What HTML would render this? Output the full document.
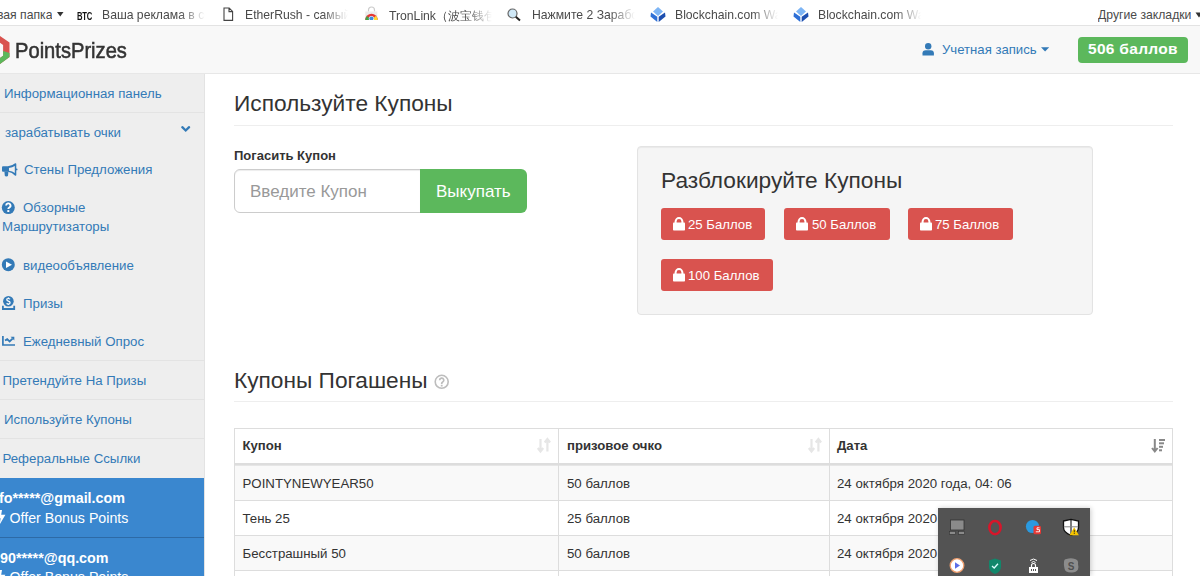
<!DOCTYPE html>
<html><head><meta charset="utf-8">
<style>
*{box-sizing:border-box;margin:0;padding:0}
html,body{width:1200px;height:576px;overflow:hidden;background:#fff;font-family:"Liberation Sans",sans-serif;color:#333}
.abs{position:absolute;white-space:nowrap}
svg{position:absolute;overflow:visible}
#bm{position:absolute;left:0;top:0;width:1200px;height:25px;background:#fff;font-size:12.2px;color:#4a4a4a}
#bmline{position:absolute;left:0;top:25px;width:1200px;height:1px;background:#e3e3e3}
.bk{position:absolute;top:8px;white-space:nowrap;overflow:hidden}
.fade{-webkit-mask-image:linear-gradient(to right,#000 75%,transparent 100%)}
#navbg{position:absolute;left:0;top:26px;width:1200px;height:47px;background:#f8f8f8}
#nav{position:absolute;left:0;top:27px;width:1200px;height:46px}
#navline{position:absolute;left:0;top:73px;width:1200px;height:1px;background:#e7e7e7}
#side{position:absolute;left:0;top:74px;width:205px;height:502px;background:#eee;border-right:1px solid #e3e3e3}
.si{position:absolute;left:0;white-space:nowrap;font-size:13.25px;color:#337ab7}
.sl{position:absolute;left:0;width:204px;height:1px;background:#e3e3e3}
.btn{position:absolute;height:32px;border-radius:3px;background:#d9534f;color:#fff;font-size:13.2px;white-space:nowrap}
.btn span{position:absolute;top:9px}
.td{position:absolute;font-size:13.25px;color:#333;white-space:nowrap}
.b{font-weight:bold;font-size:13.15px}
.h3{position:absolute;font-size:22.7px;margin-top:-1px;color:#333;white-space:nowrap}
</style></head><body>
<div id="bm">
  <div class="bk" style="left:-3px">вая папка</div>
  <svg style="left:57px;top:12px" width="8" height="6"><path d="M0 0H6.5L3.25 4.5Z" fill="#333"/></svg>
  <div class="abs" style="left:76.5px;top:10px;font-size:9px;font-weight:bold;color:#111;letter-spacing:-0.3px;transform:scale(0.85,1.2);transform-origin:0 0">BTC</div>
  <div class="bk fade" style="left:102px;width:103px">Ваша реклама в сети</div>
  <svg style="left:222.6px;top:7px" width="11" height="15"><path d="M1 1H6.2L9.6 4.4V13.4H1Z M6 1.2V4.6H9.4" fill="#fff" stroke="#444" stroke-width="1.1"/></svg>
  <div class="bk fade" style="left:245px;width:103px">EtherRush - самый</div>
  <svg style="left:365px;top:7px" width="13" height="14"><path d="M3.5 4.5V3a3 3 0 0 1 6 0V4.5" fill="none" stroke="#ccc" stroke-width="1.2"/><rect x="0.3" y="4.5" width="12" height="8.5" fill="#ececec"/><path d="M0.3 13a6.2 6.2 0 0 1 12.4 0Z" fill="#e53935"/><path d="M0.3 13a6.2 6.2 0 0 1 1.6-4.1L6.5 13Z" fill="#43a047"/><path d="M6.5 13L11 8.8a6.2 6.2 0 0 1 1.7 4.2Z" fill="#fdd835"/><circle cx="6.4" cy="11.6" r="2.6" fill="#fff"/><circle cx="6.4" cy="11.6" r="2.1" fill="#3d8fe0"/><rect x="0" y="13" width="13" height="1" fill="#fff"/></svg>
  <div class="bk fade" style="left:389px;width:103px">TronLink（波宝钱包</div>
  <svg style="left:507px;top:8px" width="14" height="13"><circle cx="5.5" cy="5.5" r="4.5" fill="#cfe8f7" stroke="#666" stroke-width="1.2"/><path d="M8.8 8.8L13 12.5" stroke="#222" stroke-width="2"/></svg>
  <div class="bk fade" style="left:532px;width:103px">Нажмите 2 Заработать</div>
  <svg style="left:650px;top:7px" width="16" height="15"><path d="M8 0L13 4.5L8 9L3 4.5Z" fill="#7db5f5"/><path d="M1 5.5L7.3 9.8V15L0.5 9.5Z" fill="#2d6fd6"/><path d="M15 5.5L8.7 9.8V15L15.5 9.5Z" fill="#1d4fb0"/></svg>
  <div class="bk fade" style="left:675px;width:103px">Blockchain.com Wallet</div>
  <svg style="left:793px;top:7px" width="16" height="15"><path d="M8 0L13 4.5L8 9L3 4.5Z" fill="#7db5f5"/><path d="M1 5.5L7.3 9.8V15L0.5 9.5Z" fill="#2d6fd6"/><path d="M15 5.5L8.7 9.8V15L15.5 9.5Z" fill="#1d4fb0"/></svg>
  <div class="bk fade" style="left:818px;width:103px">Blockchain.com Wallet</div>
  <div class="bk" style="left:1098px">Другие закладки</div>
  <svg style="left:1195px;top:12px" width="8" height="6"><path d="M0.5 0.5H7.5L4 5.5Z" fill="#333"/></svg>
</div>
<div id="bmline"></div>
<div id="navbg"></div>
<div id="nav">
  <svg style="left:0;top:0" width="12" height="46"><path d="M-4 6.1L9.5 15.5V30L-4 39.9Z M-4 13L3.1 18V28.7L-4 33.7Z" fill="#d9534f" fill-rule="evenodd"/><path d="M-4 21.7L9.5 26V30L-4 39.9Z M-4 21.7L3.1 24V28.7L-4 33.7Z" fill="#5cb85c" fill-rule="evenodd"/></svg>
  <div class="abs" style="left:14.5px;top:11px;font-size:22.5px;color:#333;transform:scaleX(0.895);transform-origin:0 0;-webkit-text-stroke:0.55px #333">PointsPrizes</div>
  <svg style="left:922px;top:15px" width="13" height="14"><circle cx="6.2" cy="4.2" r="3.2" fill="#337ab7"/><path d="M0.5 13.6V11.2Q0.5 8.3 3.8 8.3H8.6Q11.9 8.3 11.9 11.2V13.6Z" fill="#337ab7"/></svg>
  <div class="abs" style="left:942px;top:14.8px;font-size:13.15px;color:#337ab7">Учетная запись</div>
  <svg style="left:1040.5px;top:20.3px" width="9" height="5"><path d="M0 0.3H8.2L4.1 4.4Z" fill="#337ab7"/></svg>
  <div class="abs" style="left:1078px;top:10px;width:110px;height:26px;background:#5cb85c;border-radius:4px"></div>
  <div class="abs" style="left:1088px;top:13px;font-size:15.5px;font-weight:bold;color:#fff;letter-spacing:0.3px">506 баллов</div>
</div>
<div id="navline"></div>
<div id="side">
  <div class="si" style="left:4px;top:12px">Информационная панель</div>
  <div class="sl" style="top:38px"></div>
  <div class="si" style="left:5px;top:51px">зарабатывать очки</div>
  
  
  <div class="si" style="left:24px;top:88px">Стены Предложения</div>
  
  <div class="si" style="left:23px;top:126px">Обзорные</div>
  <div class="si" style="left:2px;top:145px">Маршрутизаторы</div>
  
  <div class="si" style="left:23px;top:184px">видеообъявление</div>
  
  <div class="si" style="left:23px;top:222px">Призы</div>
  
  <div class="si" style="left:23px;top:260px">Ежедневный Опрос</div>
  <div class="sl" style="top:286px"></div>
  <div class="si" style="left:2.5px;top:299px">Претендуйте На Призы</div>
  <div class="sl" style="top:325px"></div>
  <div class="si" style="left:4px;top:338px">Используйте Купоны</div>
  <div class="sl" style="top:364px"></div>
  <div class="si" style="left:2.5px;top:377px">Реферальные Ссылки</div>
  <div class="abs" style="left:0;top:404px;width:204px;height:59px;background:#3a87cf"></div>
  <div class="abs" style="left:0;top:463px;width:204px;height:1px;background:#2d6aa6"></div>
  <div class="abs" style="left:0;top:464px;width:204px;height:40px;background:#3a87cf"></div>
  <div class="abs" style="left:-1px;top:416px;font-size:14.3px;font-weight:bold;color:#fff">fo*****@gmail.com</div>
  <div class="abs" style="left:9.5px;top:435.5px;font-size:14.2px;color:#fff">Offer Bonus Points</div>
  <div class="abs" style="left:0;top:475.5px;font-size:14.3px;font-weight:bold;color:#fff">90*****@qq.com</div>
  <div class="abs" style="left:9.5px;top:495px;font-size:14.2px;color:#fff">Offer Bonus Points</div>
</div>

<div class="h3" style="left:234px;top:91px">Используйте Купоны</div>
<div class="abs" style="left:234px;top:125px;width:939px;height:1px;background:#eee"></div>
<div class="abs" style="left:234px;top:148px;font-size:13px;font-weight:bold;color:#333">Погасить Купон</div>
<div class="abs" style="left:234px;top:169px;width:187px;height:44px;border:1px solid #ccc;border-radius:6px 0 0 6px;background:#fff;box-shadow:inset 0 1px 1px rgba(0,0,0,.075)"></div>
<div class="abs" style="left:250px;top:181.5px;font-size:17px;color:#999">Введите Купон</div>
<div class="abs" style="left:420px;top:169px;width:107px;height:44px;background:#5cb85c;border-radius:0 6px 6px 0"></div>
<div class="abs" style="left:436px;top:181.5px;font-size:17px;color:#fff">Выкупать</div>

<div class="abs" style="left:637px;top:146px;width:456px;height:169px;background:#f5f5f5;border:1px solid #e3e3e3;border-radius:4px;box-shadow:inset 0 1px 1px rgba(0,0,0,.05)"></div>
<div class="h3" style="left:661px;top:168px">Разблокируйте Купоны</div>
<div class="btn" style="left:661px;top:208px;width:104px"><svg style="left:11px;top:9px" width="14" height="15"><path d="M3.6 6V4.5a3.4 3.4 0 0 1 6.8 0V6" fill="none" stroke="#fff" stroke-width="2"/><rect x="1" y="5.6" width="12" height="7.9" rx="0.8" fill="#fff"/></svg><span style="left:27px">25 Баллов</span></div>
<div class="btn" style="left:784px;top:208px;width:106px"><svg style="left:11px;top:9px" width="14" height="15"><path d="M3.6 6V4.5a3.4 3.4 0 0 1 6.8 0V6" fill="none" stroke="#fff" stroke-width="2"/><rect x="1" y="5.6" width="12" height="7.9" rx="0.8" fill="#fff"/></svg><span style="left:28px">50 Баллов</span></div>
<div class="btn" style="left:908px;top:208px;width:105px"><svg style="left:11px;top:9px" width="14" height="15"><path d="M3.6 6V4.5a3.4 3.4 0 0 1 6.8 0V6" fill="none" stroke="#fff" stroke-width="2"/><rect x="1" y="5.6" width="12" height="7.9" rx="0.8" fill="#fff"/></svg><span style="left:27px">75 Баллов</span></div>
<div class="btn" style="left:661px;top:259px;width:112px"><svg style="left:11px;top:9px" width="14" height="15"><path d="M3.6 6V4.5a3.4 3.4 0 0 1 6.8 0V6" fill="none" stroke="#fff" stroke-width="2"/><rect x="1" y="5.6" width="12" height="7.9" rx="0.8" fill="#fff"/></svg><span style="left:27px">100 Баллов</span></div>

<div class="h3" style="left:234px;top:367.5px">Купоны Погашены</div>
<svg style="left:434px;top:374px" width="16" height="16"><circle cx="7.7" cy="7.8" r="6.5" fill="none" stroke="#bdbdbd" stroke-width="1.6"/><path d="M5.6 6.2a2.1 2.1 0 1 1 3.1 1.8c-.7.4-1 .8-1 1.6v.4" fill="none" stroke="#bdbdbd" stroke-width="1.7"/><rect x="6.8" y="10.8" width="1.8" height="1.7" fill="#bdbdbd"/></svg>
<div class="abs" style="left:234px;top:401px;width:939px;height:1px;background:#eee"></div>

<div class="abs" style="left:234px;top:428px;width:939px;height:148px;border:1px solid #ddd;border-bottom:none"></div>
<div class="abs" style="left:235px;top:463px;width:937px;height:2px;background:#ddd"></div>
<div class="abs" style="left:235px;top:465px;width:937px;height:1px;background:#e6e6e6"></div>
<div class="abs" style="left:235px;top:466px;width:937px;height:34px;background:#f9f9f9"></div>
<div class="abs" style="left:235px;top:500px;width:937px;height:1px;background:#ddd"></div>
<div class="abs" style="left:235px;top:535px;width:937px;height:1px;background:#ddd"></div>
<div class="abs" style="left:235px;top:536px;width:937px;height:34px;background:#f9f9f9"></div>
<div class="abs" style="left:235px;top:570px;width:937px;height:1px;background:#ddd"></div>
<div class="abs" style="left:558px;top:429px;width:1px;height:147px;background:#ddd"></div>
<div class="abs" style="left:829px;top:429px;width:1px;height:147px;background:#ddd"></div>
<div class="td b" style="left:242.5px;top:438px">Купон</div>
<div class="td b" style="left:567px;top:438px">призовое очко</div>
<div class="td b" style="left:837px;top:438px">Дата</div>
<svg style="left:530px;top:430px" width="30" height="30">
 <path d="M10.5 9V20.5 M7.8 18L10.5 21.5L13.2 18" fill="none" stroke="#e6e6e6" stroke-width="2.2"/>
 <path d="M17.4 21.5V10 M14.7 12.5L17.4 9L20.1 12.5" fill="none" stroke="#e6e6e6" stroke-width="2.2"/>
</svg>
<svg style="left:801px;top:430px" width="30" height="30">
 <path d="M10.5 9V20.5 M7.8 18L10.5 21.5L13.2 18" fill="none" stroke="#e6e6e6" stroke-width="2.2"/>
 <path d="M17.4 21.5V10 M14.7 12.5L17.4 9L20.1 12.5" fill="none" stroke="#e6e6e6" stroke-width="2.2"/>
</svg>
<svg style="left:1145px;top:430px" width="30" height="30">
 <path d="M9.8 9V20.5 M7 18L9.8 21.5L12.6 18" fill="none" stroke="#888" stroke-width="2"/>
 <rect x="14" y="9" width="6" height="2" fill="#888"/>
 <rect x="14" y="12.3" width="5" height="2" fill="#888"/>
 <rect x="14" y="15.8" width="4" height="2" fill="#888"/>
 <rect x="14" y="19.3" width="3" height="2" fill="#888"/>
</svg>
<div class="td" style="left:242.5px;top:475.5px">POINTYNEWYEAR50</div>
<div class="td" style="left:567px;top:475.5px">50 баллов</div>
<div class="td" style="left:837px;top:475.5px">24 октября 2020 года, 04: 06</div>
<div class="td" style="left:242.5px;top:510.5px">Тень 25</div>
<div class="td" style="left:567px;top:510.5px">25 баллов</div>
<div class="td" style="left:837px;top:510.5px">24 октября 2020 года, 04: 06</div>
<div class="td" style="left:242.5px;top:545.5px">Бесстрашный 50</div>
<div class="td" style="left:567px;top:545.5px">50 баллов</div>
<div class="td" style="left:837px;top:545.5px">24 октября 2020 года, 04: 06</div>

<svg style="left:0;top:158px" width="20" height="24">
 <rect x="2" y="8.3" width="6.8" height="5.5" rx="1" fill="#337ab7"/>
 <path d="M4.4 13.5H8.4L8 17.8Q7.8 18.6 6.4 18.6Q5 18.6 4.8 17.8Z" fill="#337ab7"/>
 <path d="M8 8.3Q12 7.8 15.2 5.2Q16.3 4.9 16.3 6V17Q16.3 18.1 15.2 17.7Q12 14.5 8 13.8Z M8.9 10Q12.5 9.5 14.8 7.9V15.1Q12.5 13.2 8.9 12.8Z" fill="#337ab7" fill-rule="evenodd"/>
 <circle cx="16.6" cy="11.4" r="0.9" fill="#337ab7"/>
</svg>
<svg style="left:0;top:196px" width="20" height="24">
 <circle cx="8.3" cy="11.6" r="6.5" fill="#337ab7"/>
 <path d="M6.1 9.6a2.2 2.2 0 1 1 3.3 1.9c-.8.45-1.1.8-1.1 1.6" fill="none" stroke="#fff" stroke-width="1.9"/>
 <rect x="7.3" y="14.1" width="2" height="1.9" fill="#fff"/>
</svg>
<svg style="left:0;top:253px" width="20" height="24">
 <circle cx="8.3" cy="11.7" r="6.5" fill="#337ab7"/>
 <path d="M6 8.6L12 11.8L6 15Z" fill="#fff"/>
</svg>
<svg style="left:0;top:292px" width="20" height="24">
 <circle cx="8.4" cy="9.3" r="5.3" fill="#337ab7"/>
 <path d="M10 7.3Q9.6 6.5 8.4 6.5Q6.8 6.5 6.8 7.8Q6.8 8.8 8.4 9.2Q10.1 9.6 10.1 10.8Q10.1 12.1 8.4 12.1Q7 12.1 6.7 11.2 M8.4 5.5V6.5 M8.4 12.1V13" fill="none" stroke="#fff" stroke-width="1.2"/>
 <path d="M2.9 13.8V17H14.2V13.8" fill="none" stroke="#337ab7" stroke-width="1.8"/>
</svg>
<svg style="left:0;top:330px" width="20" height="24">
 <path d="M2.9 6V15H15" fill="none" stroke="#337ab7" stroke-width="1.7"/>
 <path d="M5 10.6L7.2 9.2L9.6 11.4L12.6 8.6" fill="none" stroke="#337ab7" stroke-width="1.8"/>
 <path d="M10.6 6.8H14.3V10.4Z" fill="#337ab7"/>
</svg>
<svg style="left:176px;top:118px" width="20" height="24">
 <path d="M6.3 9.2L9.7 12.5L13.1 9.2" fill="none" stroke="#337ab7" stroke-width="2.3" stroke-linecap="round"/>
</svg>
<svg style="left:0;top:505px" width="20" height="24">
 <path d="M-1.5 5H2L1.2 9.8H5.4L-0.3 19.6L0.6 13.3H-2.5Z" fill="#fff"/>
</svg>
<svg style="left:0;top:565px" width="20" height="24">
 <path d="M-1.5 5H2L1.2 9.8H5.4L-0.3 19.6L0.6 13.3H-2.5Z" fill="#fff"/>
</svg>
<div id="tray" class="abs" style="left:938px;top:508px;width:152px;height:68px;background:#535353;box-shadow:1px 0 5px rgba(0,0,0,.2)"></div>
<svg style="left:938px;top:508px" width="152" height="68">
 <!-- monitor -->
 <rect x="12.5" y="12" width="13.5" height="10" fill="#8a8a8a" stroke="#333" stroke-width="0.8"/>
 <rect x="11.5" y="23.3" width="6" height="3" fill="#8a8a8a" stroke="#333" stroke-width="0.6"/>
 <rect x="20.5" y="23.3" width="6" height="3" fill="#8a8a8a" stroke="#333" stroke-width="0.6"/>
 <!-- opera -->
 <ellipse cx="57" cy="19.6" rx="5.6" ry="6.6" fill="none" stroke="#d8152a" stroke-width="2.6"/>
 <!-- blue circle with red S -->
 <circle cx="94.5" cy="18.5" r="6.6" fill="#2a9ae0"/>
 <rect x="95.5" y="17.8" width="7.5" height="8.5" rx="1.5" fill="#e53935"/>
 <path d="M101.5 19.8H99V21.6H101.5V23.8H97.8" fill="none" stroke="#fff" stroke-width="0.9"/>
 <!-- shield -->
 <path d="M125.5 13Q129 12.2 133 11.3Q137 12.2 140.5 13V19.5Q140.5 24.5 133 27.3Q125.5 24.5 125.5 19.5Z" fill="#fff" stroke="#111" stroke-width="1.3"/>
 <path d="M133 11.5V27" stroke="#111" stroke-width="1.1"/>
 <path d="M125.8 18.8H140.2" stroke="#888" stroke-width="1"/>
 <path d="M136.2 19.2L140.9 27.2H131.5Z" fill="#f5c400"/>
 <rect x="135.8" y="21.8" width="0.9" height="2.6" fill="#222"/><rect x="135.8" y="25" width="0.9" height="0.9" fill="#222"/>
 <!-- play circle -->
 <circle cx="19" cy="57.5" r="6.8" fill="#fff" stroke="#f0a070" stroke-width="1.3"/>
 <circle cx="19" cy="57.5" r="5" fill="#fff"/>
 <path d="M17 54.2L22 57.5L17 60.8Z" fill="#5b6ee8"/>
 <!-- green shield -->
 <path d="M51 52.5L57 50.5L63 52.5V59Q63 63.5 57 66Q51 63.5 51 59Z" fill="#11876b"/>
 <path d="M54 58L56.2 60L60 55.8" fill="none" stroke="#dff" stroke-width="1.3"/>
 <!-- lock with wifi -->
 <path d="M92 52.5Q95.5 49.5 99 52.5 M93.5 54.5Q95.5 52.5 97.5 54.5" fill="none" stroke="#fff" stroke-width="1"/>
 <path d="M93.5 59V57.5a2 2 0 0 1 4 0V59" fill="none" stroke="#fff" stroke-width="1.2"/>
 <rect x="91" y="59" width="9" height="6" fill="#fff"/>
 <rect x="93" y="61" width="1" height="2" fill="#555"/><rect x="95" y="61" width="1" height="2" fill="#555"/><rect x="97" y="61" width="1" height="2" fill="#555"/>
 <!-- skype -->
 <path d="M128.5 51Q126 51 126 54Q125.5 57.5 126.5 60.5Q127 64.5 133 64.5Q138 65 140 61.5Q140.8 59 140 56Q140.8 52 137 51Q133 49.5 128.5 51Z" fill="#8c8c8c"/>
 <text x="133" y="61.5" font-family="Liberation Sans" font-weight="bold" font-size="10" fill="#505050" text-anchor="middle">S</text>
</svg>
</body></html>
